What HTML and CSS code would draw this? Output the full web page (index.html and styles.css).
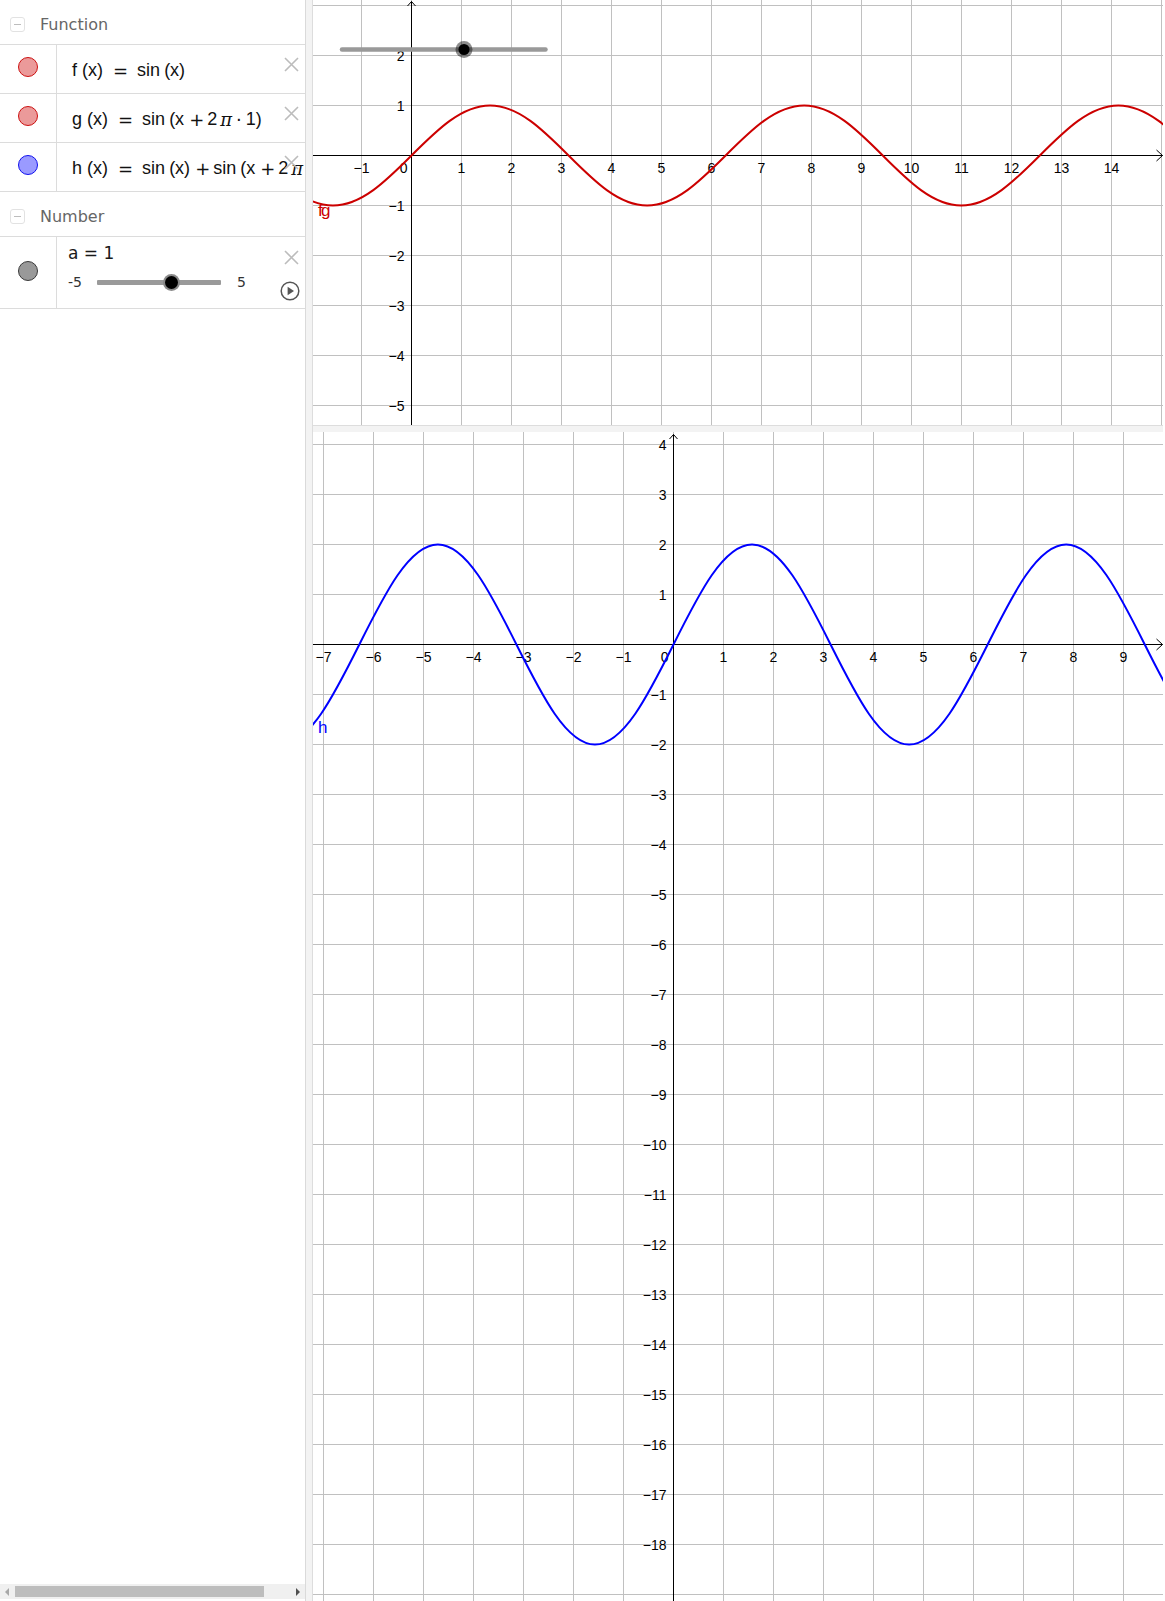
FILE: index.html
```html
<!DOCTYPE html>
<html>
<head>
<meta charset="utf-8">
<link rel="stylesheet" href="styles.css">
</head>
<body>
<div class="app">
  <div class="algebra">
    <div class="group-header">
      <span class="toggle"><span class="toggle-bar"></span></span>
      <span class="group-title">Function</span>
    </div>
    <div class="item">
      <div class="marker-col"><span class="dot dot-red"></span></div>
      <div class="formula"><span class="fn">f</span>(x)<span class="op">=</span><span class="fs">sin</span>(x)</div>
      <svg class="del" width="15" height="15" viewBox="0 0 15 15"><path d="M1 1L14 14M14 1L1 14"/></svg>
    </div>
    <div class="item">
      <div class="marker-col"><span class="dot dot-red"></span></div>
      <div class="formula"><span class="fn">g</span>(x)<span class="op">=</span><span class="fs">sin</span>(x<span class="op op-s">+</span>2 <i class="pi">π</i><span class="op op-d">·</span>1)</div>
      <svg class="del" width="15" height="15" viewBox="0 0 15 15"><path d="M1 1L14 14M14 1L1 14"/></svg>
    </div>
    <div class="item">
      <div class="marker-col"><span class="dot dot-blue"></span></div>
      <div class="formula"><span class="fn">h</span>(x)<span class="op">=</span><span class="fs">sin</span>(x)<span class="op op-s">+</span><span class="fs">sin</span>(x<span class="op op-s">+</span>2 <i class="pi">π</i><span class="op op-d">·</span>1)</div>
      <svg class="del" width="15" height="15" viewBox="0 0 15 15"><path d="M1 1L14 14M14 1L1 14"/></svg>
    </div>
    <div class="group-header group-header-b">
      <span class="toggle"><span class="toggle-bar"></span></span>
      <span class="group-title">Number</span>
    </div>
    <div class="item item-num">
      <div class="marker-col"><span class="dot dot-gray"></span></div>
      <div class="num-content">
        <div class="num-label">a = 1</div>
        <div class="slider-row">
          <span class="slider-min">-5</span>
          <span class="slider-track"><span class="slider-knob"></span></span>
          <span class="slider-max">5</span>
        </div>
      </div>
      <svg class="del del-num" width="15" height="15" viewBox="0 0 15 15"><path d="M1 1L14 14M14 1L1 14"/></svg>
      <svg class="play" width="20" height="20" viewBox="0 0 20 20"><circle cx="10" cy="10" r="8.8"/><path d="M7.6 5.8L14 10L7.6 14.2Z"/></svg>
    </div>
    <div class="spacer"></div>
    <div class="hscroll">
      <span class="arrow-left"></span>
      <span class="thumb"></span>
      <span class="arrow-right"></span>
    </div>
  </div>
  <div class="vsplit"></div>
  <div class="graphics">
    <svg class="plot plot-top" width="850" height="425" viewBox="0 0 850 425">
      <defs>
        <pattern id="gridTop" x="48" y="5" width="50" height="50" patternUnits="userSpaceOnUse">
          <path d="M0.5 0V50M0 0.5H50" class="gridline"/>
        </pattern>
      </defs>
      <rect width="850" height="425" fill="url(#gridTop)"/>
      <path class="axis" d="M0 155.5H849.5M98.5 1.5V425"/>
      <path class="axis" d="M843.5 150L849.5 155.5L843.5 161M94.5 6L98.5 1.5L102.5 6"/>
      <g class="ticks">
        <text x="48.5" y="173" text-anchor="middle">−1</text>
        <text x="94.5" y="173" text-anchor="end">0</text>
        <text x="148.5" y="173" text-anchor="middle">1</text>
        <text x="198.5" y="173" text-anchor="middle">2</text>
        <text x="248.5" y="173" text-anchor="middle">3</text>
        <text x="298.5" y="173" text-anchor="middle">4</text>
        <text x="348.5" y="173" text-anchor="middle">5</text>
        <text x="398.5" y="173" text-anchor="middle">6</text>
        <text x="448.5" y="173" text-anchor="middle">7</text>
        <text x="498.5" y="173" text-anchor="middle">8</text>
        <text x="548.5" y="173" text-anchor="middle">9</text>
        <text x="598.5" y="173" text-anchor="middle">10</text>
        <text x="648.5" y="173" text-anchor="middle">11</text>
        <text x="698.5" y="173" text-anchor="middle">12</text>
        <text x="748.5" y="173" text-anchor="middle">13</text>
        <text x="798.5" y="173" text-anchor="middle">14</text>
        <text x="91.5" y="61" text-anchor="end">2</text>
        <text x="91.5" y="111" text-anchor="end">1</text>
        <text x="91.5" y="211" text-anchor="end">−1</text>
        <text x="91.5" y="261" text-anchor="end">−2</text>
        <text x="91.5" y="311" text-anchor="end">−3</text>
        <text x="91.5" y="361" text-anchor="end">−4</text>
        <text x="91.5" y="411" text-anchor="end">−5</text>
      </g>
      <path class="curve curve-red" transform="translate(98.5 155.5) scale(50 -50)" d="M-6.2832,0 c0.5123,0.5123 1.0023,1 1.5708,1 c0.5685,0 1.0585,-0.4877 1.5708,-1 c0.5123,-0.5123 1.0023,-1 1.5708,-1 c0.5685,0 1.0585,0.4877 1.5708,1 c0.5123,0.5123 1.0023,1 1.5708,1 c0.5685,0 1.0585,-0.4877 1.5708,-1 c0.5123,-0.5123 1.0023,-1 1.5708,-1 c0.5685,0 1.0585,0.4877 1.5708,1 c0.5123,0.5123 1.0023,1 1.5708,1 c0.5685,0 1.0585,-0.4877 1.5708,-1 c0.5123,-0.5123 1.0023,-1 1.5708,-1 c0.5685,0 1.0585,0.4877 1.5708,1 c0.5123,0.5123 1.0023,1 1.5708,1 c0.5685,0 1.0585,-0.4877 1.5708,-1 c0.5123,-0.5123 1.0023,-1 1.5708,-1 c0.5685,0 1.0585,0.4877 1.5708,1"/>
      <text class="flabel flabel-red" x="5" y="216">f</text>
      <text class="flabel flabel-red" x="8" y="216">g</text>
      <path class="gslider-track" d="M29 49.5H232.5"/>
      <circle class="gslider-halo" cx="151" cy="49.5" r="8.5"/>
      <circle class="gslider-knob" cx="151" cy="49.5" r="5.5"/>
    </svg>
    <div class="hsplit"></div>
    <svg class="plot plot-bottom" width="850" height="1169" viewBox="0 0 850 1169">
      <defs>
        <pattern id="gridBottom" x="10" y="12" width="50" height="50" patternUnits="userSpaceOnUse">
          <path d="M0.5 0V50M0 0.5H50" class="gridline"/>
        </pattern>
      </defs>
      <rect width="850" height="1169" fill="url(#gridBottom)"/>
      <path class="axis" d="M0 212.5H849.5M360.5 2.5V1169"/>
      <path class="axis" d="M843.5 207L849.5 212.5L843.5 218M356.5 7L360.5 2.5L364.5 7"/>
      <g class="ticks">
        <text x="10.5" y="230" text-anchor="middle">−7</text>
        <text x="60.5" y="230" text-anchor="middle">−6</text>
        <text x="110.5" y="230" text-anchor="middle">−5</text>
        <text x="160.5" y="230" text-anchor="middle">−4</text>
        <text x="210.5" y="230" text-anchor="middle">−3</text>
        <text x="260.5" y="230" text-anchor="middle">−2</text>
        <text x="310.5" y="230" text-anchor="middle">−1</text>
        <text x="355.5" y="230" text-anchor="end">0</text>
        <text x="410.5" y="230" text-anchor="middle">1</text>
        <text x="460.5" y="230" text-anchor="middle">2</text>
        <text x="510.5" y="230" text-anchor="middle">3</text>
        <text x="560.5" y="230" text-anchor="middle">4</text>
        <text x="610.5" y="230" text-anchor="middle">5</text>
        <text x="660.5" y="230" text-anchor="middle">6</text>
        <text x="710.5" y="230" text-anchor="middle">7</text>
        <text x="760.5" y="230" text-anchor="middle">8</text>
        <text x="810.5" y="230" text-anchor="middle">9</text>
        <text x="353.5" y="18" text-anchor="end">4</text>
        <text x="353.5" y="68" text-anchor="end">3</text>
        <text x="353.5" y="118" text-anchor="end">2</text>
        <text x="353.5" y="168" text-anchor="end">1</text>
        <text x="353.5" y="268" text-anchor="end">−1</text>
        <text x="353.5" y="318" text-anchor="end">−2</text>
        <text x="353.5" y="368" text-anchor="end">−3</text>
        <text x="353.5" y="418" text-anchor="end">−4</text>
        <text x="353.5" y="468" text-anchor="end">−5</text>
        <text x="353.5" y="518" text-anchor="end">−6</text>
        <text x="353.5" y="568" text-anchor="end">−7</text>
        <text x="353.5" y="618" text-anchor="end">−8</text>
        <text x="353.5" y="668" text-anchor="end">−9</text>
        <text x="353.5" y="718" text-anchor="end">−10</text>
        <text x="353.5" y="768" text-anchor="end">−11</text>
        <text x="353.5" y="818" text-anchor="end">−12</text>
        <text x="353.5" y="868" text-anchor="end">−13</text>
        <text x="353.5" y="918" text-anchor="end">−14</text>
        <text x="353.5" y="968" text-anchor="end">−15</text>
        <text x="353.5" y="1018" text-anchor="end">−16</text>
        <text x="353.5" y="1068" text-anchor="end">−17</text>
        <text x="353.5" y="1118" text-anchor="end">−18</text>
      </g>
      <path class="curve curve-blue" transform="translate(360.5 212.5) scale(50 -100)" d="M-12.5664,0 c0.5123,0.5123 1.0023,1 1.5708,1 c0.5685,0 1.0585,-0.4877 1.5708,-1 c0.5123,-0.5123 1.0023,-1 1.5708,-1 c0.5685,0 1.0585,0.4877 1.5708,1 c0.5123,0.5123 1.0023,1 1.5708,1 c0.5685,0 1.0585,-0.4877 1.5708,-1 c0.5123,-0.5123 1.0023,-1 1.5708,-1 c0.5685,0 1.0585,0.4877 1.5708,1 c0.5123,0.5123 1.0023,1 1.5708,1 c0.5685,0 1.0585,-0.4877 1.5708,-1 c0.5123,-0.5123 1.0023,-1 1.5708,-1 c0.5685,0 1.0585,0.4877 1.5708,1 c0.5123,0.5123 1.0023,1 1.5708,1 c0.5685,0 1.0585,-0.4877 1.5708,-1 c0.5123,-0.5123 1.0023,-1 1.5708,-1 c0.5685,0 1.0585,0.4877 1.5708,1"/>
      <text class="flabel flabel-blue" x="5" y="301">h</text>
    </svg>
  </div>
</div>
</body>
</html>
```

FILE: styles.css
```css
* { box-sizing: border-box; }
html, body {
  margin: 0;
  padding: 0;
  background: #ffffff;
}
body {
  width: 1165px;
  height: 1601px;
  overflow: hidden;
  font-family: "DejaVu Sans", sans-serif;
}
.app {
  display: flex;
  height: 1601px;
}
.algebra {
  width: 306px;
  flex: none;
  border-right: 1px solid #dadada;
  display: flex;
  flex-direction: column;
  background: #fff;
}
.group-header {
  height: 44px;
  padding: 5px 0 0 10px;
  display: flex;
  align-items: center;
}
.group-header-b {
  height: 45px;
  border-top: 1px solid #dcdcdc;
}
.toggle {
  width: 15px;
  height: 15px;
  border: 1px solid #e2e2e2;
  border-radius: 3px;
  display: flex;
  align-items: center;
  justify-content: center;
  margin-right: 15px;
}
.toggle-bar {
  width: 7px;
  height: 1px;
  background: #bdbdbd;
}
.group-title {
  font-family: "DejaVu Sans", sans-serif;
  font-size: 16px;
  color: #666666;
}
.item {
  position: relative;
  display: flex;
  height: 49px;
  border-top: 1px solid #dcdcdc;
  overflow: hidden;
}
.item-num {
  height: 73px;
  border-bottom: 1px solid #dcdcdc;
}
.marker-col {
  width: 57px;
  flex: none;
  border-right: 1px solid #dcdcdc;
  display: flex;
  align-items: center;
  justify-content: center;
}
.dot {
  width: 20px;
  height: 20px;
  border-radius: 50%;
  margin-bottom: 4px;
  margin-left: -1px;
}
.dot-red { background: #eb9a9a; border: 1px solid #cc1111; }
.dot-blue { background: #9a9aff; border: 1px solid #1111ee; }
.dot-gray { background: #999999; border: 1px solid #3a3a3a; }
.formula {
  padding-left: 15px;
  padding-top: 2px;
  display: flex;
  align-items: center;
  white-space: nowrap;
  font-family: "Liberation Sans", sans-serif;
  font-size: 18px;
  color: #111;
}
.fn { margin-right: 5px; }
.fs { margin-right: 4px; }
.op {
  font-family: "DejaVu Sans", sans-serif;
  margin: 0 9px 0 10px;
}
.op-s { margin: 0 3px 0 5px; }
.op-d { margin: 0 4px 0 4px; }
.pi {
  font-family: "DejaVu Serif", serif;
  font-style: italic;
  margin-left: 3px;
}
.del {
  position: absolute;
  right: 6px;
  top: 12px;
}
.del path {
  stroke: #bcbcbc;
  stroke-width: 1.6;
  fill: none;
}
.del-num { top: 13px; }
.play {
  position: absolute;
  right: 5px;
  top: 44px;
}
.play circle {
  fill: #fff;
  stroke: #555;
  stroke-width: 1.5;
}
.play path { fill: #555; }
.num-content {
  padding: 5px 0 0 11px;
}
.num-label {
  font-family: "DejaVu Sans", sans-serif;
  font-size: 17px;
  line-height: 22px;
  color: #1a1a1a;
}
.slider-row {
  margin-top: 8px;
  height: 20px;
  display: flex;
  align-items: center;
  font-family: "DejaVu Sans", sans-serif;
  font-size: 14px;
  color: #333;
}
.slider-min { width: 29px; }
.slider-track {
  position: relative;
  width: 124px;
  height: 5px;
  background: #9a9a9a;
  border-radius: 1px;
  margin-right: 16px;
}
.slider-knob {
  position: absolute;
  left: 68px;
  top: -4px;
  width: 13px;
  height: 13px;
  border-radius: 50%;
  background: #000;
  box-shadow: 0 0 0 2px #8a8a8a;
}
.spacer { flex: 1; }
.hscroll {
  height: 15px;
  margin-bottom: 2px;
  background: #f0f0f0;
  display: flex;
  align-items: center;
  padding-left: 5px;
}
.arrow-left {
  width: 0;
  height: 0;
  border-top: 4px solid transparent;
  border-bottom: 4px solid transparent;
  border-right: 4px solid #a8a8a8;
  margin-right: 6px;
}
.thumb {
  width: 249px;
  height: 11px;
  background: #bdbdbd;
  margin-right: 32px;
}
.arrow-right {
  width: 0;
  height: 0;
  border-top: 4px solid transparent;
  border-bottom: 4px solid transparent;
  border-left: 4px solid #505050;
}
.vsplit {
  width: 7px;
  flex: none;
  background: #f3f3f3;
  border-right: 1px solid #dddddd;
}
.graphics {
  width: 850px;
  flex: none;
  display: flex;
  flex-direction: column;
}
.plot { display: block; flex: none; }
.hsplit {
  height: 7px;
  flex: none;
  background: #f3f3f3;
  border-top: 1px solid #dddddd;
}
.gridline {
  stroke: #c0c0c0;
  stroke-width: 1;
  fill: none;
}
.axis {
  stroke: #000;
  stroke-width: 1;
  fill: none;
}
.ticks text {
  font-family: "Liberation Sans", sans-serif;
  font-size: 14px;
  fill: #000;
}
.curve {
  fill: none;
  stroke-width: 2;
  vector-effect: non-scaling-stroke;
}
.curve-red { stroke: #cc0000; }
.curve-blue { stroke: #0000ff; }
.flabel {
  font-family: "Liberation Sans", sans-serif;
  font-size: 17px;
}
.flabel-red { fill: #cc0000; }
.flabel-blue { fill: #0000ff; }
.gslider-track {
  stroke: #999;
  stroke-width: 4.5;
  stroke-linecap: round;
  fill: none;
}
.gslider-halo { fill: rgba(0, 0, 0, 0.45); }
.gslider-knob { fill: #000; }
```
